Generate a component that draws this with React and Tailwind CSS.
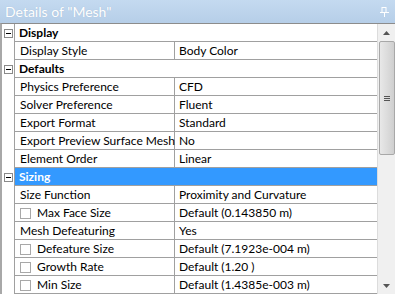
import React from "react";

const rows = [
  { type: "cat", name: "Display" },
  { name: "Display Style", value: "Body Color" },
  { type: "cat", name: "Defaults" },
  { name: "Physics Preference", value: "CFD" },
  { name: "Solver Preference", value: "Fluent" },
  { name: "Export Format", value: "Standard" },
  { name: "Export Preview Surface Mesh", value: "No" },
  { name: "Element Order", value: "Linear" },
  { type: "cat", name: "Sizing", selected: true },
  { name: "Size Function", value: "Proximity and Curvature" },
  { name: "Max Face Size", value: "Default (0.143850 m)", check: true },
  { name: "Mesh Defeaturing", value: "Yes" },
  { name: "Defeature Size", value: "Default (7.1923e-004 m)", check: true },
  { name: "Growth Rate", value: "Default (1.20 )", check: true },
  { name: "Min Size", value: "Default (1.4385e-003 m)", check: true },
];

function Minus() {
  return (
    <div className="w-[9px] h-[9px] border border-[#8a8a8a] bg-white flex items-center justify-center">
      <div className="w-[5px] h-px bg-black" />
    </div>
  );
}

export default function App() {
  return (
    <div
      className="w-[395px] h-[294px] bg-[#f0f0f0] overflow-hidden flex flex-col text-[12px] text-black"
      style={{ fontFamily: 'Lato, "Noto Sans", sans-serif' }}
    >
      <div className="h-[23px] shrink-0 bg-gradient-to-b from-[#c4daf0] to-[#b6cee8] flex items-center justify-between pl-[5px] pr-[6px]">
        <span className="text-white text-[14px] leading-none [text-shadow:0_0_1px_#9fb7d0]">
          Details of "Mesh"
        </span>
        <svg width="9" height="10" viewBox="0 0 9 10">
          <rect x="2" y="0.5" width="4" height="5" fill="none" stroke="white" />
          <rect x="0" y="5" width="9" height="1" fill="white" />
          <rect x="4" y="6" width="1" height="4" fill="white" />
        </svg>
      </div>
      <div className="flex-1 flex border-t border-[#8c8c8c] border-l-2 border-l-[#a8a8a8] bg-white">
        <div className="flex-1 flex flex-col">
          {rows.map((r, i) => (
            <div key={i} className="h-[18px] flex shrink-0">
              <div className="w-[13px] shrink-0 flex items-center justify-center border-r border-[#a0a0a0]">
                {r.type === "cat" && <Minus />}
              </div>
              {r.type === "cat" ? (
                <div
                  className={
                    "flex-1 flex items-center pl-[4px] pt-[1px] font-bold border-b border-[#a0a0a0] " +
                    (r.selected ? "bg-[#3399ff] text-white" : "")
                  }
                >
                  {r.name}
                </div>
              ) : (
                <>
                  <div className="w-[160px] shrink-0 flex items-center pl-[5px] pt-[1px] border-b border-r border-[#a0a0a0] whitespace-nowrap">
                    {r.check && (
                      <div className="w-[11px] h-[11px] border border-[#a8a8a8] bg-white mr-[6px] shrink-0" />
                    )}
                    {r.name}
                  </div>
                  <div className="flex-1 flex items-center pl-[4px] pt-[1px] border-b border-[#a0a0a0] whitespace-nowrap overflow-hidden">
                    {r.value}
                  </div>
                </>
              )}
            </div>
          ))}
        </div>
        <div className="w-[18px] shrink-0 bg-[#f0f0f0] border-l border-[#dcdcdc] flex flex-col items-center">
          <div className="h-[17px] w-full flex items-center justify-center">
            <svg width="7" height="4" viewBox="0 0 7 4"><path d="M0 4 L3.5 0 L7 4 Z" fill="#555" /></svg>
          </div>
          <div className="w-[16px] h-[114px] bg-gradient-to-r from-[#e8e8e8] via-[#dcdcdc] to-[#cfcfcf] border border-[#a8a8a8] rounded-[2px] flex flex-col items-center justify-center gap-[1px]">
            <div className="w-[6px] h-px bg-[#555]" />
            <div className="w-[6px] h-px bg-[#555]" />
            <div className="w-[6px] h-px bg-[#555]" />
          </div>
          <div className="flex-1" />
          <div className="h-[17px] w-full flex items-center justify-center">
            <svg width="7" height="4" viewBox="0 0 7 4"><path d="M0 0 L3.5 4 L7 0 Z" fill="#555" /></svg>
          </div>
        </div>
      </div>
    </div>
  );
}
